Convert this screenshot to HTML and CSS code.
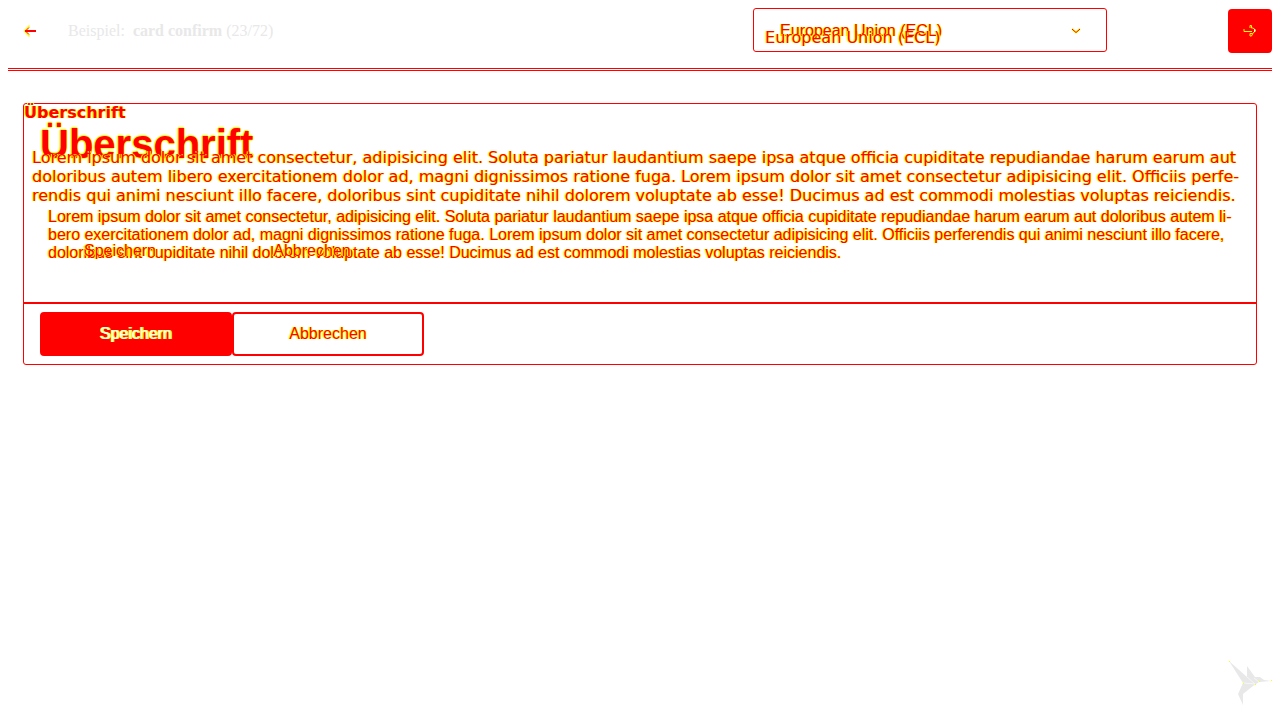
FILE: index.html
```
<!DOCTYPE html>
<html lang="de">
<head>
<meta charset="utf-8">
<title>card confirm</title>
<link rel="stylesheet" href="styles.css">
</head>
<body>
<header class="toolbar">
  <button class="icon-button" type="button" aria-label="Zurück"><svg width="14" height="14" viewBox="0 0 14 14" fill="none"><path d="M6.500 1.500L1.500 7L6.500 12.500" stroke="#ff0" stroke-width="1.500"/><path d="M6 3.500L2.500 7L6 10.500" stroke="red"/><path d="M2 7H13" stroke="red" stroke-width="2"/></svg></button>
  <p class="example">Beispiel:&nbsp; <strong>card confirm</strong> (23/72)</p>
  <div class="theme">
    <select class="theme-select" aria-label="Theme"><option>European Union (ECL)</option></select>
    <span class="theme-ghost" aria-hidden="true">European Union (ECL)</span>
    <svg class="chevron" width="10" height="6" viewBox="0 0 10 6" fill="none"><path d="M1 1L5 4.500L9 1" stroke="#ff0" stroke-width="2"/><path d="M1 1L5 4.500L9 1" stroke="red"/></svg>
  </div>
  <button class="next-button" type="button" aria-label="Weiter"><svg width="14" height="14" viewBox="0 0 14 14" fill="none" stroke="#ff0"><path d="M1 5V7.500H9M7 4V1.500H8.500V4H10L13 6.500L10 9L8.500 12H7V9.500H9.500"/><path d="M11.500 5V8" stroke="#fff"/></svg></button>
</header>
<main class="page">
  <article class="card">
    <div class="card-main">
      <h1 class="title">Überschrift</h1>
      <p class="text">Lorem ipsum dolor sit amet consectetur, adipisicing elit. Soluta pariatur laudantium saepe ipsa atque officia cupiditate repudiandae harum earum aut doloribus autem li&shy;bero exercitationem dolor ad, magni dignissimos ratione fuga. Lorem ipsum dolor sit amet consectetur adipisicing elit. Officiis perferendis qui animi nesciunt illo facere, doloribus sint cupiditate nihil dolorem voluptate ab esse! Ducimus ad est commodi molestias voluptas reiciendis.</p>
    </div>
    <footer class="actions">
      <button class="action primary" type="button">Speichern</button>
      <button class="action" type="button">Abbrechen</button>
    </footer>
    <div class="overlay">
      <h2 class="overlay-title">Überschrift</h2>
      <p class="overlay-text">Lorem ipsum dolor sit amet consectetur, adipisicing elit. Soluta pariatur laudantium saepe ipsa atque officia cupiditate repudiandae harum earum aut doloribus autem libero exercitationem dolor ad, magni dignissimos ratione fuga. Lorem ipsum dolor sit amet consectetur adipisicing elit. Officiis perfe&shy;rendis qui animi nesciunt illo facere, doloribus sint cupiditate nihil dolorem voluptate ab esse! Ducimus ad est commodi molestias voluptas reiciendis.</p>
      <div class="overlay-actions"><span class="overlay-action">Speichern</span><span class="overlay-action">Abbrechen</span></div>
    </div>
  </article>
</main>
<svg class="bird" width="44" height="46" viewBox="0 0 44 46"><path fill="#e8e8e8" d="M1 1L19 17V6L27 17L32 17L36 20L43 21L31 22L25 26L15 34V45L10 34L15 23Z"/><path d="M15 23L27 24M19 17L27 24M26 18L31 22" stroke="#f6f6f6" fill="none"/><path fill="#ff0" d="M1 1h1v1h-1zM15 23h1v1h-1zM27 24h1v1h-1zM31 21h1v1h-1zM43 20h1v1h-1z"/></svg>
</body>
</html>
```

FILE: styles.css
```
* { box-sizing: border-box; }
body { margin: 8px; background: #fff; color: red; font: 16px/18px "Liberation Sans", Arial, sans-serif; }
h1, h2, p { margin: 0; }
button, select { font: inherit; color: inherit; margin: 0; }
.toolbar { display: flex; align-items: flex-end; height: 63px; padding-bottom: 15px; border-bottom: 3px double red; }
.icon-button { display: flex; align-items: center; justify-content: center; width: 44px; height: 44px; padding: 0; border: 0; background: none; }
.example { flex: 1; padding-left: 16px; color: #e8e8e8; font-family: "Liberation Serif", "Times New Roman", serif; line-height: 44px; }
.theme { position: relative; align-self: flex-start; width: 28%; margin-right: 121px; }
.theme-select { display: block; width: 100%; height: 44px; padding: 2px 26px 0; appearance: none; border: 1px solid red; border-radius: 3px; background: #fff; text-shadow: -1px 0 #ff0, 1px 0 #ff0; }
.theme-ghost { position: absolute; left: 12px; top: 21px; font-family: "DejaVu Sans", Verdana, sans-serif; text-shadow: -1px 0 #ff0, 1px 0 #ff0; pointer-events: none; }
.chevron { position: absolute; right: 26px; top: 20px; pointer-events: none; }
.next-button { display: flex; align-items: center; justify-content: center; width: 44px; height: 44px; padding: 0; border: 0; border-radius: 4px; background: red; }
.page { padding: 32px 15px; }
.card { position: relative; border: 1px solid red; border-radius: 3px; text-shadow: -1px 0 #ff0, 1px 0 #ff0; }
.card-main { padding: 16px 24px 40px; }
.title { margin-left: -8px; font-size: 40px; line-height: 48px; text-shadow: -1px 0 #ff0, 1px 0 #ff0, 0 -1px #ff0, 0 1px #ff0; }
.text { padding-top: 40px; }
.actions { display: flex; padding: 8px 16px; border-top: 2px solid red; }
.action { width: 192px; height: 44px; border: 2px solid red; border-radius: 4px; background: #fff; text-shadow: -1px 0 #ff0, 1px 0 #ff0; }
.primary { background: red; color: #fff; }
.overlay { position: absolute; inset: 0; font-family: "DejaVu Sans", Verdana, sans-serif; pointer-events: none; }
.overlay-title { font-size: 16px; line-height: 18px; }
.overlay-text { padding: 26px 8px 0; line-height: 19px; }
.overlay-actions { display: flex; padding: 37px 0 0; font-family: "Liberation Sans", Arial, sans-serif; }
.overlay-action { width: 192px; text-align: center; }
.bird { position: fixed; right: 8px; bottom: 14px; }
```
